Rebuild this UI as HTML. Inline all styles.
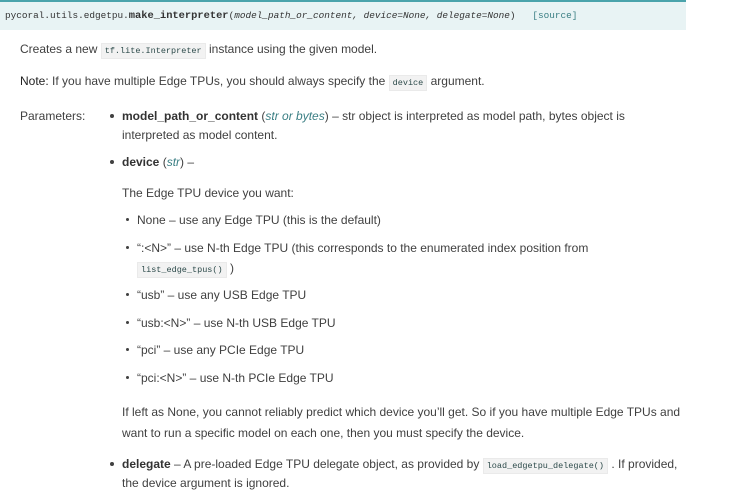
<!DOCTYPE html>
<html><head><meta charset="utf-8"><style>
body{margin:0;width:752px;height:504px;background:#fff;position:relative;overflow:hidden;font-family:"Liberation Sans",sans-serif;font-size:12px;color:#404040}
.l{position:absolute;white-space:nowrap;line-height:16px}
.hd{position:absolute;left:0;top:0;width:686px;height:30px;background:#e8f3f4;border-top:2px solid #4aa3ab;box-sizing:border-box}
.hd .t{position:absolute;left:5px;top:8px;font-family:"Liberation Mono",monospace;font-size:9.4px;color:#333;white-space:nowrap}
code{font-family:"Liberation Mono",monospace;font-size:8.5px;background:#f2f2f2;border:1px solid #eaeaea;padding:2px 3px;color:#2c4a4a}
b{font-weight:600;color:#333}
i.ty{color:#3b7f84}
.bu{position:absolute;width:4px;height:4px;border-radius:50%;background:#404040}
</style></head><body>
<div class="hd"><div class="t">pycoral.utils.edgetpu.<b style="font-size:10.4px;font-weight:bold">make_interpreter</b>(<i>model_path_or_content, device=None, delegate=None</i>)&nbsp;&nbsp;&nbsp;<span style="color:#3b7f84">[source]</span></div></div>

<div class="l" style="left:20px;top:41px">Creates a new <code>tf.lite.Interpreter</code> instance using the given model.</div>
<div class="l" style="left:20px;top:73px"><span style="color:#222">Note:</span> If you have multiple Edge TPUs, you should always specify the <code>device</code> argument.</div>

<div class="l" style="left:20px;top:108px">Parameters:</div>
<div class="bu" style="left:110px;top:114px"></div>
<div class="l" style="left:122px;top:108px"><b>model_path_or_content</b> (<i class="ty">str or bytes</i>) – str object is interpreted as model path, bytes object is</div>
<div class="l" style="left:122px;top:127px">interpreted as model content.</div>
<div class="bu" style="left:110px;top:160px"></div>
<div class="l" style="left:122px;top:154px"><b>device</b> (<i class="ty">str</i>) –</div>
<div class="l" style="left:122px;top:185px">The Edge TPU device you want:</div>

<div class="bu" style="left:126px;top:218px;width:3px;height:3px"></div>
<div class="l" style="left:137px;top:212px">None – use any Edge TPU (this is the default)</div>
<div class="bu" style="left:126px;top:246px;width:3px;height:3px"></div>
<div class="l" style="left:137px;top:240px">“:&lt;N&gt;” – use N-th Edge TPU (this corresponds to the enumerated index position from</div>
<div class="l" style="left:137px;top:260px"><code>list_edge_tpus()</code> )</div>
<div class="bu" style="left:126px;top:293px;width:3px;height:3px"></div>
<div class="l" style="left:137px;top:287px">“usb” – use any USB Edge TPU</div>
<div class="bu" style="left:126px;top:321px;width:3px;height:3px"></div>
<div class="l" style="left:137px;top:315px">“usb:&lt;N&gt;” – use N-th USB Edge TPU</div>
<div class="bu" style="left:126px;top:348px;width:3px;height:3px"></div>
<div class="l" style="left:137px;top:342px">“pci” – use any PCIe Edge TPU</div>
<div class="bu" style="left:126px;top:376px;width:3px;height:3px"></div>
<div class="l" style="left:137px;top:370px">“pci:&lt;N&gt;” – use N-th PCIe Edge TPU</div>

<div class="l" style="left:122px;top:404px">If left as None, you cannot reliably predict which device you’ll get. So if you have multiple Edge TPUs and</div>
<div class="l" style="left:122px;top:425px">want to run a specific model on each one, then you must specify the device.</div>
<div class="bu" style="left:110px;top:462px"></div>
<div class="l" style="left:122px;top:456px"><b>delegate</b> – A pre-loaded Edge TPU delegate object, as provided by <code>load_edgetpu_delegate()</code> . If provided,</div>
<div class="l" style="left:122px;top:475px">the device argument is ignored.</div>
</body></html>
